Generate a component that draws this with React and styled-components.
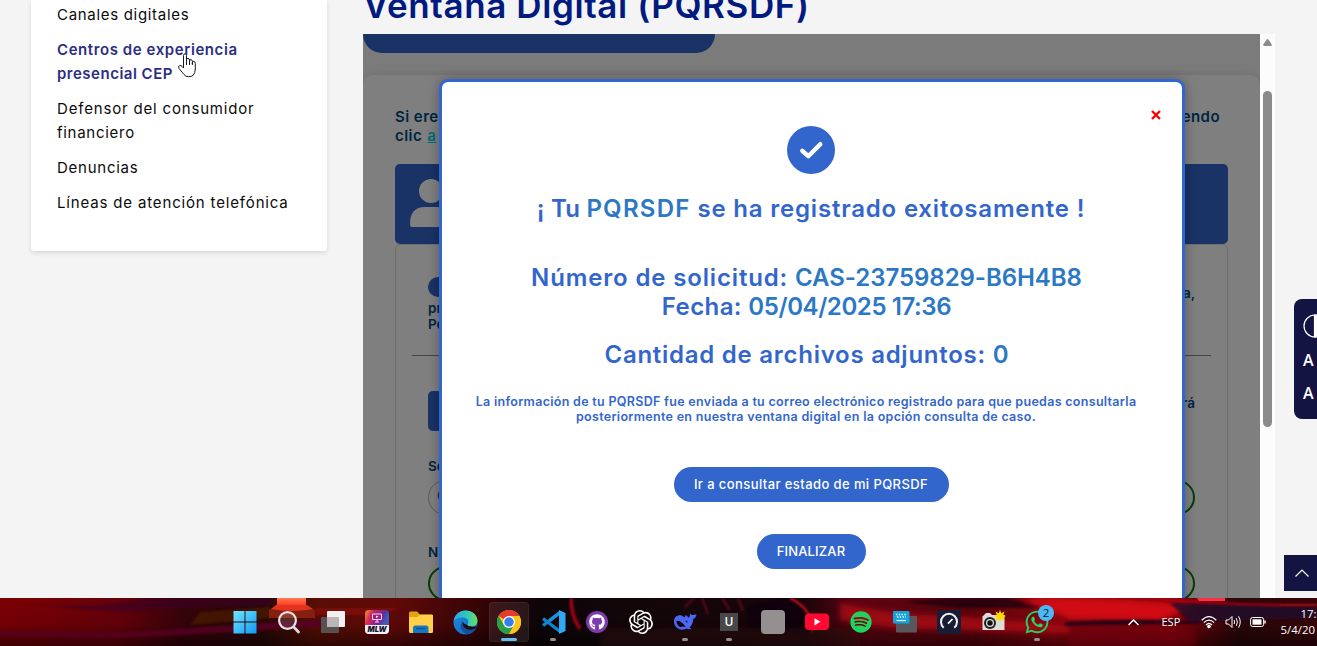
import React from 'react';
import styled, { createGlobalStyle } from 'styled-components';
import { FaGithub, FaWhatsapp, FaSpotify } from 'react-icons/fa';
import { SiOpenai } from 'react-icons/si';

const Global = createGlobalStyle`
  *, *::before, *::after { box-sizing: border-box; }
  body { margin: 0; overflow: hidden; font-family: Inter, "Liberation Sans", sans-serif; }
  svg { display: block; flex: none; }
`;

const Screen = styled.div`
  position: relative;
  display: flex;
  flex-direction: column;
  width: 1317px;
  height: 646px;
  overflow: hidden;
  background: #f4f4f4;
`;

const Page = styled.main`
  display: flex;
  align-items: flex-start;
  height: 598px;
  padding-left: 31px;
  gap: 36px;
  overflow: hidden;
`;

/* Side menu */
const SideMenu = styled.nav`
  width: 296px;
  height: 251px;
  flex: none;
  padding: 3px 26px 0 26px;
  background: #fff;
  border-radius: 0 0 3px 3px;
  box-shadow: 0 2px 5px rgba(0, 0, 0, 0.11);
  display: flex;
  flex-direction: column;
  gap: 11px;
`;
const MenuLink = styled.a`
  font-size: 15px;
  line-height: 24px;
  white-space: nowrap;
  color: ${(p) => (p.$active ? '#2b2e83' : '#0b0b0b')};
  font-weight: ${(p) => (p.$active ? 600 : 400)};
`;
const Line = styled.span`
  display: block;
  letter-spacing: ${(p) => p.$track || 0}px;
`;

/* Content column */
const Content = styled.section`
  display: flex;
  flex-direction: column;
  width: 912px;
  height: 598px;
  flex: none;
`;
const Title = styled.h1`
  margin: 0;
  height: 34px;
  flex: none;
  display: flex;
  align-items: flex-end;
  padding-bottom: 5px;
  font-size: 35px;
  line-height: 48px;
  font-weight: 600;
  letter-spacing: 0.6px;
  color: #001a80;
  white-space: nowrap;
`;
const Frame = styled.div`
  display: flex;
  flex: 1;
  min-height: 0;
`;
const Viewport = styled.div`
  position: relative;
  width: 897px;
  height: 564px;
  overflow: hidden;
  background: #f7f7f7;
`;
const TopPill = styled.div`
  width: 352px;
  height: 19px;
  background: #3366cc;
  border-radius: 0 0 20px 20px;
`;
const FormCard = styled.div`
  margin-top: 22px;
  height: 560px;
  padding: 32px;
  background: #fff;
  border-radius: 10px;
  box-shadow: 0 0 12px rgba(0, 0, 0, 0.12);
`;
const Intro = styled.div`
  display: flex;
  justify-content: space-between;
  padding-right: 8px;
  font-size: 15px;
  font-weight: 600;
  line-height: 19px;
  letter-spacing: 0.45px;
  color: #004a80;
`;
const IntroLink = styled.a`
  margin-left: 1px;
  color: #00d5e8;
  text-decoration: underline;
`;
const Banner = styled.div`
  display: flex;
  align-items: flex-start;
  margin-top: 19px;
  height: 80px;
  padding: 14px 0 0 15px;
  background: #3366cc;
  border-radius: 5px;
`;
const Panel = styled.div`
  height: 400px;
  padding: 32px 32px 0;
  border: 1px solid #dadada;
  border-radius: 5px;
`;
const SplitText = styled.div`
  display: flex;
  justify-content: space-between;
  align-items: flex-start;
  color: #004a80;
  font-size: 13.5px;
  font-weight: 600;
  line-height: 15.5px;
`;
const Tail = styled.span`
  padding-top: ${(p) => p.$top}px;
`;
const Badge = styled.span`
  display: block;
  width: 90px;
  height: 20px;
  margin-bottom: 4px;
  border-radius: 10px;
  background: #3366cc;
`;
const Rule = styled.hr`
  margin: 23px -16px 34px;
  height: 2px;
  border: 0;
  border-top: 1px solid #8a8a8a;
`;
const BlueTile = styled.span`
  width: 60px;
  height: 40px;
  border-radius: 5px;
  background: #3366cc;
`;
const FieldLabel = styled.div`
  margin-top: ${(p) => p.$top}px;
  height: 18px;
  line-height: 18px;
  font-size: 13.5px;
  font-weight: 600;
  color: #004a80;
`;
const FieldRow = styled.div`
  display: grid;
  grid-template-columns: 1fr 1fr;
  margin-top: 5px;
`;
const Field = styled.div`
  height: 35px;
  border-radius: 18px;
  border: ${(p) => (p.$valid ? '2px solid #008000' : '1px solid #b5b5b5')};
  padding-left: 8px;
  font-size: 14px;
  line-height: 30px;
  color: #70381c;
`;

const Scrollbar = styled.div`
  display: flex;
  flex-direction: column;
  align-items: center;
  width: 15px;
  padding-top: 5px;
  background: #fcfcfc;
`;
const Thumb = styled.div`
  width: 9px;
  height: 336px;
  margin-top: 45px;
  border-radius: 5px;
  background: #8b8b8b;
`;

/* Dialog */
const Backdrop = styled.div`
  position: absolute;
  inset: 0;
  background: rgba(0, 0, 0, 0.5);
`;
const Dialog = styled.div`
  position: absolute;
  left: 76px;
  top: 45px;
  width: 746px;
  height: 560px;
  padding-right: 2px;
  border: 3px solid #3366cc;
  border-radius: 9px;
  background: #fff;
  box-shadow: 0 0 12px rgba(0, 0, 0, 0.3);
  display: flex;
  flex-direction: column;
  align-items: center;
`;
const CloseRow = styled.div`
  align-self: stretch;
  display: flex;
  justify-content: flex-end;
  padding: 27.5px 19.5px 0 0;
  height: 44px;
`;
const CheckCircle = styled.div`
  width: 48px;
  height: 48px;
  border-radius: 50%;
  background: #3366cc;
`;
const Heading = styled.h2`
  margin: ${(p) => p.$top}px 0 0;
  font-size: 24px;
  font-weight: 600;
  line-height: 29px;
  color: #3366cc;
  white-space: pre;
  text-align: center;
`;
const Tracked = styled.span`
  letter-spacing: ${(p) => p.$track}px;
`;
const Value = styled(Tracked)`
  color: #2b78c6;
`;
const HeadingGroup = styled.div`
  padding-right: ${(p) => p.$shift}px;
`;
const Note = styled.p`
  margin: 25px 10px 0 0;
  font-size: 12.5px;
  font-weight: 600;
  line-height: 15px;
  letter-spacing: 0.3px;
  color: #3366cc;
  text-align: center;
  white-space: nowrap;
`;
const PillButton = styled.button`
  margin-top: ${(p) => p.$top}px;
  width: ${(p) => p.$width}px;
  height: 35px;
  padding: 0 0 1px;
  border: 0;
  border-radius: 18px;
  background: #3366cc;
  color: #fff;
  font: 500 13px Inter, "Liberation Sans", sans-serif;
  letter-spacing: ${(p) => p.$track}px;
  white-space: nowrap;
`;

/* Floating widgets */
const Accessibility = styled.aside`
  position: absolute;
  left: 1294px;
  top: 299px;
  width: 23px;
  height: 120px;
  padding: 15px 0 0 9px;
  overflow: hidden;
  border-radius: 8px 0 0 8px;
  background: #141442;
  color: #fff;
  display: flex;
  flex-direction: column;
`;
const SizeLetter = styled.span`
  margin-top: ${(p) => p.$top}px;
  font: 600 16px/20px "Open Sans", sans-serif;
`;
const BackToTop = styled.button`
  position: absolute;
  left: 1284px;
  top: 555px;
  width: 33px;
  height: 36px;
  padding: 0 0 0 11px;
  border: 0;
  background: #141442;
`;
const Pointer = styled.svg`
  position: absolute;
  left: 178px;
  top: 53px;
`;

/* Taskbar */
const Taskbar = styled.footer`
  position: relative;
  display: flex;
  align-items: stretch;
  height: 48px;
  padding-left: 223px;
  overflow: hidden;
  background: #1a0508;
`;
const Wallpaper = styled.svg`
  position: absolute;
  inset: 0;
`;
const Apps = styled.div`
  position: relative;
  display: grid;
  grid-template-columns: repeat(19, 44px);
`;
const AppSlot = styled.div`
  position: relative;
  display: flex;
  align-items: center;
  justify-content: center;
  color: ${(p) => p.$color || '#fff'};
  &::before {
    content: '';
    display: ${(p) => (p.$active ? 'block' : 'none')};
    position: absolute;
    inset: 4px 2px;
    border-radius: 4px;
    border: 1px solid rgba(255, 255, 255, 0.06);
    background: rgba(255, 255, 255, 0.08);
  }
  &::after {
    content: '';
    display: ${(p) => (p.$active || p.$running ? 'block' : 'none')};
    position: absolute;
    bottom: 5px;
    width: ${(p) => (p.$active ? 16 : 6)}px;
    height: 3px;
    border-radius: 2px;
    background: ${(p) => (p.$active ? '#60c0f5' : '#969092')};
  }
  > svg { position: relative; }
`;
const UTile = styled.span`
  width: 18px;
  height: 18px;
  background: #484848;
  color: #fff;
  font: 600 12px/18px "Open Sans", sans-serif;
  text-align: center;
`;
const BlankTile = styled.span`
  width: 24px;
  height: 24px;
  border-radius: 4px;
  background: #949090;
`;
const Count = styled.span`
  position: absolute;
  top: 7px;
  left: 23px;
  width: 16px;
  height: 16px;
  border-radius: 50%;
  background: #4cb8f5;
  color: #0c1b2a;
  font: 400 11.5px/16px "Open Sans", sans-serif;
  text-align: center;
`;
const MlwTile = styled.span`
  display: flex;
  flex-direction: column;
  align-items: center;
  width: 24px;
  height: 24px;
  overflow: hidden;
  border-radius: 4px;
  background: radial-gradient(circle at 50% 30%, #9b1d86 10%, transparent 45%),
    linear-gradient(120deg, #e0a13a, #e3264f 25%, #5b2a9c 55%, #2b62c8 70%, #d52b54);
`;
const MlwLabel = styled.b`
  width: 24px;
  height: 9px;
  margin-top: 1px;
  background: #f4f2f6;
  color: #1c1730;
  font: italic 900 7.5px/9px Inter, sans-serif;
  text-align: center;
`;
const Tray = styled.div`
  position: relative;
  display: flex;
  align-items: center;
  margin-left: 69px;
  color: #fff;
`;
const Language = styled.span`
  width: 21px;
  margin: 0 18px 0 22.500px;
  font: 400 11px/16px "Open Sans", sans-serif;
`;
const Status = styled.div`
  display: flex;
  align-items: center;
  gap: 8px;
`;
const Clock = styled.div`
  width: 50px;
  margin-left: 15px;
  font: 400 11.4px/16px "Open Sans", sans-serif;
`;
const ClockTime = styled.div`
  padding-left: 20px;
`;

const WallpaperArt = () => (
  <Wallpaper width="1317" height="48" viewBox="0 0 1317 48" preserveAspectRatio="none">
    <defs>
      <linearGradient id="wBase">
        <stop offset="0" stopColor="#7c0004" />
        <stop offset=".09" stopColor="#680009" />
        <stop offset=".14" stopColor="#36030a" />
        <stop offset=".2" stopColor="#2a0906" />
        <stop offset=".24" stopColor="#5a0e04" />
        <stop offset=".3" stopColor="#620908" />
        <stop offset=".37" stopColor="#330306" />
        <stop offset=".41" stopColor="#0d0508" />
        <stop offset=".5" stopColor="#140609" />
        <stop offset=".61" stopColor="#190409" />
        <stop offset=".65" stopColor="#5c0412" />
        <stop offset=".74" stopColor="#5b040b" />
        <stop offset=".8" stopColor="#8a0610" />
        <stop offset=".89" stopColor="#85030a" />
        <stop offset=".94" stopColor="#2b0709" />
        <stop offset="1" stopColor="#3a0409" />
      </linearGradient>
      <linearGradient id="wShade" x2="0" y2="1">
        <stop offset="0" stopColor="#000" stopOpacity="0" />
        <stop offset=".55" stopColor="#000" stopOpacity=".08" />
        <stop offset="1" stopColor="#000" stopOpacity=".5" />
      </linearGradient>
      <linearGradient id="wLamp" x2="0" y2="1">
        <stop offset="0" stopColor="#ff7c50" />
        <stop offset="1" stopColor="#ff3c28" />
      </linearGradient>
      <filter id="soft" x="-20%" y="-100%" width="140%" height="300%">
        <feGaussianBlur stdDeviation="3" />
      </filter>
      <filter id="soft1" x="-20%" y="-100%" width="140%" height="300%">
        <feGaussianBlur stdDeviation="1" />
      </filter>
    </defs>
    <rect width="1317" height="48" fill="url(#wBase)" />
    <rect width="1317" height="48" fill="url(#wShade)" />
    <path d="M20 6 Q90 12 150 0 L270 0 L270 8 Q180 8 120 14Z" fill="#3b0628" opacity=".6" filter="url(#soft1)" />
    <path d="M0 33 L110 35 Q200 30 290 23 L340 20 L340 28 L200 36 L110 40 L0 38Z" fill="#570622" opacity=".85" filter="url(#soft1)" />
    <path d="M200 14 L270 9 L270 20 L190 27Z" fill="#4b1a04" opacity=".7" filter="url(#soft1)" />
    <path d="M269 12 L276 8 H307 L315 12 V20 H269Z" fill="#84200f" />
    <path d="M276 7 H307 L313 11 Q292 15 271 11Z" fill="#e2331e" />
    <rect x="277" width="29" height="7" fill="url(#wLamp)" />
    <path d="M315 10 H400 L380 17 H315Z" fill="#8c1109" opacity=".65" filter="url(#soft1)" />
    <path d="M571 0 Q571 18 580 31" stroke="#a50519" strokeWidth="3.500" fill="none" filter="url(#soft1)" />
    <g stroke="#760a25" strokeWidth="3" fill="none" opacity=".55" filter="url(#soft1)">
      <path d="M685 9 L694 0 M702 0 L708 16 M722 0 L730 12 M738 0 L743 13" />
    </g>
    <path d="M748 8 L787 0 L812 18 L805 38 L750 32Z" fill="#08060a" opacity=".8" filter="url(#soft1)" />
    <path d="M790 0 Q814 12 812 34" stroke="#cf0a20" strokeWidth="2" fill="none" filter="url(#soft1)" />
    <path d="M600 30 H860 V48 H600Z" fill="#2b070a" opacity=".55" filter="url(#soft)" />
    <path d="M840 4 Q880 16 960 18 L1070 28 L1070 35 L900 31 L840 22Z" fill="#bb0715" opacity=".7" filter="url(#soft)" />
    <path d="M905 4 L960 0 H1010 L1040 10 L960 10Z" fill="#13040c" opacity=".7" filter="url(#soft1)" />
    <path d="M1020 0 Q1100 -2 1195 7 L1160 23 L1070 21Z" fill="#e50c12" opacity=".8" filter="url(#soft)" />
    <path d="M1065 24 Q1130 20 1200 23 L1200 26 L1065 28Z" fill="#2d0618" filter="url(#soft1)" />
    <path d="M1170 5 L1317 9 V20 L1190 24Z" fill="#21082a" opacity=".85" filter="url(#soft1)" />
    <path d="M1150 0 Q1230 8 1317 7" stroke="#b30718" strokeWidth="2" fill="none" filter="url(#soft1)" />
    <path d="M1197 0 H1225 V3 H1199Z" fill="#ff3044" />
    <path d="M1070 30 H1195 V48 H1070Z" fill="#73030a" opacity=".6" filter="url(#soft)" />
  </Wallpaper>
);

const WindowsIcon = () => (
  <svg width="24" height="24" viewBox="0 0 24 24">
    <defs><linearGradient id="win" x2="1" y2="1"><stop stopColor="#6fe5ff" /><stop offset="1" stopColor="#0d9bf5" /></linearGradient></defs>
    <path fill="url(#win)" d="M.5 1H11.5V11.5H.5ZM12.5 1H23.5V11.5H12.5ZM.5 12.5H11.5V23.5H.5ZM12.5 12.5H23.5V23.5H12.5Z" />
  </svg>
);
const SearchIcon = () => (
  <svg width="24" height="24" viewBox="0 0 24 24" fill="none">
    <circle cx="10.5" cy="10.5" r="8.4" fill="#ffffff22" stroke="#e6e3e6" strokeWidth="2.2" />
    <path d="M16.7 17L21.5 22" stroke="#dcdadd" strokeWidth="2.8" strokeLinecap="round" />
  </svg>
);
const TaskViewIcon = () => (
  <svg width="26" height="24" viewBox="0 0 26 24">
    <rect x="1" y="7" width="18" height="16" rx="1" fill="#58514f" />
    <rect x="7" y="1" width="18" height="16" rx="1" fill="#f1f1f1" />
    <path d="M7 7H19V17H7Z" fill="#bab7b6" />
  </svg>
);
const MonitorIcon = () => (
  <svg width="14" height="14" viewBox="0 0 14 14" fill="none" stroke="#f7d8f0">
    <path d="M2.5 4H11.5V9.5H2.5ZM5 12H9M7 9.5V12" /><path d="M6 5.5L8.5 6.8L6 8Z" fill="#fff" stroke="none" />
  </svg>
);
const FolderIcon = () => (
  <svg width="26" height="24" viewBox="0 0 26 24">
    <path d="M1 3Q1 1.500 2.500 1.500H9L12 4.500H23.500Q25 4.500 25 6V12H1Z" fill="#e3a40f" />
    <path d="M1 7H9.500L12 4.800H24Q25 4.800 25 6V21.500Q25 23 23.500 23H2.500Q1 23 1 21.500Z" fill="#ffcf48" />
    <path d="M5 23V18Q5 15.500 7.500 15.500H18Q20.500 15.500 20.500 18V23Z" fill="#1578c6" />
    <path d="M8.500 18.500H17" stroke="#0b4f94" strokeWidth="1.500" strokeLinecap="round" />
  </svg>
);
const EdgeIcon = () => (
  <svg width="25" height="25" viewBox="0 0 24 24">
    <defs>
      <linearGradient id="edgeA" x1="0" x2="1"><stop stopColor="#2aa7e6" /><stop offset=".6" stopColor="#35c9b4" /><stop offset="1" stopColor="#6bdf5a" /></linearGradient>
      <linearGradient id="edgeB" y2="1"><stop stopColor="#1c8bdc" /><stop offset="1" stopColor="#1268c0" /></linearGradient>
    </defs>
    <circle cx="12" cy="12" r="11.500" fill="url(#edgeB)" />
    <path d="M.6 10.500C1.500 4.500 6.300.5 12 .5C18.700.5 23.500 5.200 23.500 10C23.500 13.500 20.800 15.800 17.500 15.800C15 15.800 13.700 14.900 13.700 14.100C13.700 13.500 14.700 13 14.700 11.300C14.700 9 12.500 7.300 9.200 7.300C5.200 7.300 2 9 .6 10.500Z" fill="url(#edgeA)" />
    <path d="M9.400 11C7 13 6.800 17 9 20C10.500 22 12.500 23 14 23.300C17.500 22.700 20.500 20.800 22 18C17 20.400 10.800 18.500 9.400 14Z" fill="#14509f" />
    <path d="M9.400 11C8.600 14.500 11 18.700 16 18.900C18.700 19 20.800 18.200 22.300 17.200L23 15.300C21.500 16 19.500 16.200 17.500 15.800C15 15.800 13.700 14.900 13.700 14.100C12 14 10 13.200 9.400 11Z" fill="#240a18" />
  </svg>
);
const ChromeIcon = () => (
  <svg width="24" height="24" viewBox="0 0 48 48">
    <circle cx="24" cy="24" r="24" fill="#fbc116" />
    <path d="M24 24L3.200 12A24 24 0 0 1 44.800 12Z" fill="#e33b2e" />
    <path d="M3.200 12A24 24 0 0 0 24 48L34.400 30L24 24L13.600 30Z" fill="#269f4c" />
    <path d="M24 12H44.800A24 24 0 0 1 24 48L34.400 30Z" fill="#fcc41c" />
    <circle cx="24" cy="24" r="12" fill="#fff" />
    <circle cx="24" cy="24" r="9.500" fill="#347ff0" />
  </svg>
);
const CodeIcon = () => (
  <svg width="25" height="24" viewBox="0 0 24 24" fill="none">
    <path d="M18.500 2.500L1.500 15.500M1.500 8.500L18.500 21.500" stroke="#0f83cf" strokeWidth="3.300" />
    <path d="M18.500 2.500L8 10.600" stroke="#1c90da" strokeWidth="3.300" />
    <path d="M17.500 0L24 3V21L17.500 24Z" fill="#30a8f2" />
  </svg>
);
const WhaleIcon = () => (
  <svg width="24" height="24" viewBox="0 0 24 24">
    <path d="M1 11.500C1 7 4 5 7.500 5.200C9 5.400 10.200 6.800 11.500 7.200C12.300 6.700 12.300 5.500 13 5L15.800 7.800C17 6.600 16.700 4.500 17.300 3.500C17.700 4.400 18.500 4.900 19.500 4.900C21 4.800 22.500 4.800 23.500 4.200C23.300 6.500 22.200 8.300 20.300 9C20 12.700 18.700 15.700 16.500 17.600L18.700 19.200C16.500 19.500 14.800 19.200 13.200 18.500C11.500 19.500 9 20.100 6.700 19.300C3.200 18 1 15.200 1 11.500Z" fill="#4a68f5" />
    <path d="M3.500 11C6.300 9.500 10.500 13.500 12.700 17C10 16.500 8.600 16.200 8 17.300C5.500 16.800 3.500 14 3.500 11Z" fill="#14060a" />
    <path d="M12 10.500C13.300 10 14.800 11.200 14.700 12.800C13.700 12.500 13 11.600 12 10.500Z" fill="#14060a" />
  </svg>
);
const YouTubeIcon = () => (
  <svg width="24" height="18" viewBox="0 0 24 18">
    <rect y=".5" width="24" height="16.500" rx="4" fill="#ff0832" />
    <path d="M9.500 5.200L15.500 8.800L9.500 12.400Z" fill="#fff" />
  </svg>
);
const KeyboardIcon = () => (
  <svg width="26" height="24" viewBox="0 0 26 24">
    <rect x="4" y="6" width="21" height="16.500" rx="1" fill="#56585d" />
    <rect x="1" y="1" width="16.500" height="12.500" rx="1" fill="#13a4de" />
    <path d="M4 4.500H15M5 7H14" stroke="#fff" strokeWidth="1.300" strokeDasharray="1.300 1.500" />
    <path d="M4.500 10.500H14" stroke="#fff" strokeWidth="1.200" />
  </svg>
);
const GaugeIcon = () => (
  <svg width="24" height="24" viewBox="0 0 24 24" fill="none">
    <rect width="24" height="24" fill="#181d35" />
    <path d="M6.700 17.800A8 8 0 1 1 17.300 17.800" stroke="#f0f0f4" strokeWidth="2" />
    <path d="M11 13.700L15.500 9" stroke="#fff" strokeWidth="1.800" />
  </svg>
);
const CameraIcon = () => (
  <svg width="25" height="24" viewBox="0 0 25 24">
    <path d="M2 6L5 3H9L11 5H23.500V20H1.500V6Z" fill="#dcdcdc" />
    <circle cx="9" cy="13" r="6" fill="#202020" /><circle cx="9" cy="13" r="4" fill="#dadada" /><circle cx="9" cy="13" r="2.700" fill="#111" />
    <path d="M19 0L20.300 3.200L23.500 1.500L22.300 4.800L25 6L22.300 7.200L23.500 11L20.300 9L19 12L17.700 9L14.500 11L15.700 7.200L13 6L15.700 4.800L14.500 1.500L17.700 3.200Z" fill="#ffd800" />
  </svg>
);
const WifiIcon = () => (
  <svg width="16" height="14" viewBox="0 0 16 14" fill="none" stroke="#fff" strokeWidth="1.200">
    <path d="M.7 5.200Q8 -2 15.300 5.200M2.900 7.700Q8 2.500 13.100 7.700M5 10Q8 7 11 10" />
    <circle cx="8" cy="11.500" r="1.200" fill="#fff" />
  </svg>
);
const VolumeIcon = () => (
  <svg width="17" height="14" viewBox="0 0 17 14" fill="none" stroke="#fff">
    <path d="M1 5H3.500L7 1.500V12.500L3.500 9H1Z" /><path d="M9 5Q10.300 7 9 9M11.300 3.200Q13.500 7 11.300 10.800M13.500 1.300Q17 7 13.500 12.700" />
  </svg>
);
const BatteryIcon = () => (
  <svg width="16" height="12" viewBox="0 0 16 12" fill="none" stroke="#fff">
    <rect x=".6" y="1.500" width="13" height="9" rx="2" /><rect x="2.500" y="3.300" width="9" height="5.400" fill="#fff" stroke="none" /><path d="M15 4.500V7.500" strokeWidth="1.500" />
  </svg>
);

export default function App() {
  return (
    <Screen>
      <Global />
      <Page>
        <SideMenu>
          <MenuLink><Line $track={0.69}>Canales digitales</Line></MenuLink>
          <MenuLink $active>
            <Line $track={0.58}>Centros de experiencia</Line>
            <Line $track={0.5}>presencial CEP</Line>
          </MenuLink>
          <MenuLink>
            <Line $track={0.82}>Defensor del consumidor</Line>
            <Line $track={0.72}>financiero</Line>
          </MenuLink>
          <MenuLink><Line $track={0.75}>Denuncias</Line></MenuLink>
          <MenuLink><Line $track={0.84}>Líneas de atención telefónica</Line></MenuLink>
        </SideMenu>

        <Content>
          <Title>Ventana Digital (PQRSDF)</Title>
          <Frame>
            <Viewport>
              <TopPill />
              <FormCard>
                <Intro>
                  <span>Si ere<br />clic <IntroLink>a</IntroLink></span>
                  <span>endo</span>
                </Intro>
                <Banner>
                  <svg width="42" height="50" viewBox="0 0 42 50" fill="#fff">
                    <circle cx="21" cy="13" r="12" />
                    <path d="M0 46Q0 29 15 29H27Q42 29 42 46Q42 49 40 49H2Q0 49 0 46Z" />
                  </svg>
                </Banner>
                <Panel>
                  <SplitText>
                    <span><Badge />pr<br />Pe</span>
                    <Tail $top={9}>a,</Tail>
                  </SplitText>
                  <Rule />
                  <SplitText>
                    <BlueTile />
                    <Tail $top={5}>rá</Tail>
                  </SplitText>
                  <FieldLabel $top={26}>Se</FieldLabel>
                  <FieldRow><Field>C</Field><Field $valid /></FieldRow>
                  <FieldLabel $top={28}>N</FieldLabel>
                  <FieldRow><Field $valid /><Field $valid /></FieldRow>
                </Panel>
              </FormCard>
              <Backdrop />
              <Dialog>
                <CloseRow>
                  <svg width="10" height="10" viewBox="0 0 10 10" stroke="#f00" strokeWidth="2.300">
                    <path d="M1 1L9 9M9 1L1 9" />
                  </svg>
                </CloseRow>
                <CheckCircle>
                  <svg width="48" height="48" viewBox="0 0 48 48" fill="none" stroke="#fff" strokeWidth="4.400" strokeLinecap="round" strokeLinejoin="round">
                    <path d="M15.300 24.800L21.300 30.200L33.300 18.200" />
                  </svg>
                </CheckCircle>
                <Heading $top={20}>
                  <Tracked $track={0.2}>¡ Tu </Tracked>
                  <Value $track={1.25}>PQRSDF</Value>
                  <Tracked $track={0.8}> se ha registrado exitosamente !</Tracked>
                </Heading>
                <HeadingGroup $shift={9}>
                  <Heading $top={40}>
                    <Tracked $track={0.85}>Número de solicitud: </Tracked>
                    <Value $track={-0.05}>CAS-23759829-B6H4B8</Value>
                  </Heading>
                  <Heading $top={0}>
                    <Tracked $track={0.4}>Fecha: </Tracked>
                    <Value $track={-0.4}>05/04/2025 17:36</Value>
                  </Heading>
                  <Heading $top={19}>
                    <Tracked $track={0.74}>Cantidad de archivos adjuntos: </Tracked>
                    <Value $track={0}>0</Value>
                  </Heading>
                </HeadingGroup>
                <Note>
                  La información de tu PQRSDF fue enviada a tu correo electrónico registrado para que puedas consultarla
                  <br />
                  posteriormente en nuestra ventana digital en la opción consulta de caso.
                </Note>
                <PillButton $top={43} $width={275} $track={0.41}>Ir a consultar estado de mi PQRSDF</PillButton>
                <PillButton $top={32} $width={109} $track={0.15}>FINALIZAR</PillButton>
              </Dialog>
            </Viewport>
            <Scrollbar>
              <svg width="9" height="7" viewBox="0 0 9 7" fill="#8b8b8b"><path d="M4.500 0Q5 0 5.400.6L8.800 5.600Q9 7 8 7H1Q0 7 .2 5.600L3.600.6Q4 0 4.500 0Z" /></svg>
              <Thumb />
            </Scrollbar>
          </Frame>
        </Content>
      </Page>

      <Accessibility>
        <svg width="24" height="24" viewBox="0 0 24 24" fill="none" stroke="#fff" strokeWidth="1.200">
          <circle cx="12" cy="12" r="11" /><path d="M11.500 1V23A11 11 0 0 0 11.500 1Z" fill="#fff" />
        </svg>
        <SizeLetter $top={12}>A</SizeLetter>
        <SizeLetter $top={13}>A</SizeLetter>
      </Accessibility>
      <BackToTop>
        <svg width="14" height="8" viewBox="0 0 14 8" fill="none" stroke="#fff" strokeWidth="1.200"><path d="M.5 7.500L7 1L13.500 7.500" /></svg>
      </BackToTop>
      <Pointer width="19" height="25" viewBox="0 0 19 25">
        <path d="M5.500 15V2.500Q5.500 .8 7 .8Q8.500 .8 8.500 2.500V10V6.700Q8.600 5.300 10 5.400Q11.500 5.500 11.500 7V10.500V7.800Q11.700 6.500 13 6.700Q14.400 6.900 14.400 8.300V11V9.300Q14.600 8.200 15.800 8.400Q17.300 8.600 17.300 10.500V16Q17.300 20 15 22.500Q13.500 23.700 10.500 23.700Q7.500 23.700 6 21.500L1 15.500Q0 13.300 1.500 12.600Q3 12 4.200 13.500Z" fill="#fff" stroke="#17172a" />
        <path d="M8.500 10V12M11.500 10V12M14.400 10.500V12" stroke="#17172a" />
      </Pointer>

      <Taskbar>
        <WallpaperArt />
        <Apps>
          <AppSlot><WindowsIcon /></AppSlot>
          <AppSlot><SearchIcon /></AppSlot>
          <AppSlot><TaskViewIcon /></AppSlot>
          <AppSlot><MlwTile><MonitorIcon /><MlwLabel>MLW</MlwLabel></MlwTile></AppSlot>
          <AppSlot><FolderIcon /></AppSlot>
          <AppSlot><EdgeIcon /></AppSlot>
          <AppSlot $active><ChromeIcon /></AppSlot>
          <AppSlot $running><CodeIcon /></AppSlot>
          <AppSlot>
            <svg width="22" height="22" viewBox="0 0 22 22">
              <circle cx="11" cy="11" r="11" fill="#7d3cae" />
              <FaGithub x="3" y="3" size={16} color="#fff" />
            </svg>
          </AppSlot>
          <AppSlot><SiOpenai size={24} /></AppSlot>
          <AppSlot $running><WhaleIcon /></AppSlot>
          <AppSlot $running><UTile>U</UTile></AppSlot>
          <AppSlot><BlankTile /></AppSlot>
          <AppSlot><YouTubeIcon /></AppSlot>
          <AppSlot $color="#1ed45f"><FaSpotify size={22} /></AppSlot>
          <AppSlot><KeyboardIcon /></AppSlot>
          <AppSlot><GaugeIcon /></AppSlot>
          <AppSlot><CameraIcon /></AppSlot>
          <AppSlot $running $color="#22d366"><FaWhatsapp size={26} /><Count>2</Count></AppSlot>
        </Apps>
        <Tray>
          <svg width="11" height="7" viewBox="0 0 11 7" fill="none" stroke="#fff" strokeWidth="1.500"><path d="M.5 6L5.500 1L10.500 6" /></svg>
          <Language>ESP</Language>
          <Status><WifiIcon /><VolumeIcon /><BatteryIcon /></Status>
          <Clock>
            <ClockTime>17:</ClockTime>
            5/4/20
          </Clock>
        </Tray>
      </Taskbar>
    </Screen>
  );
}
